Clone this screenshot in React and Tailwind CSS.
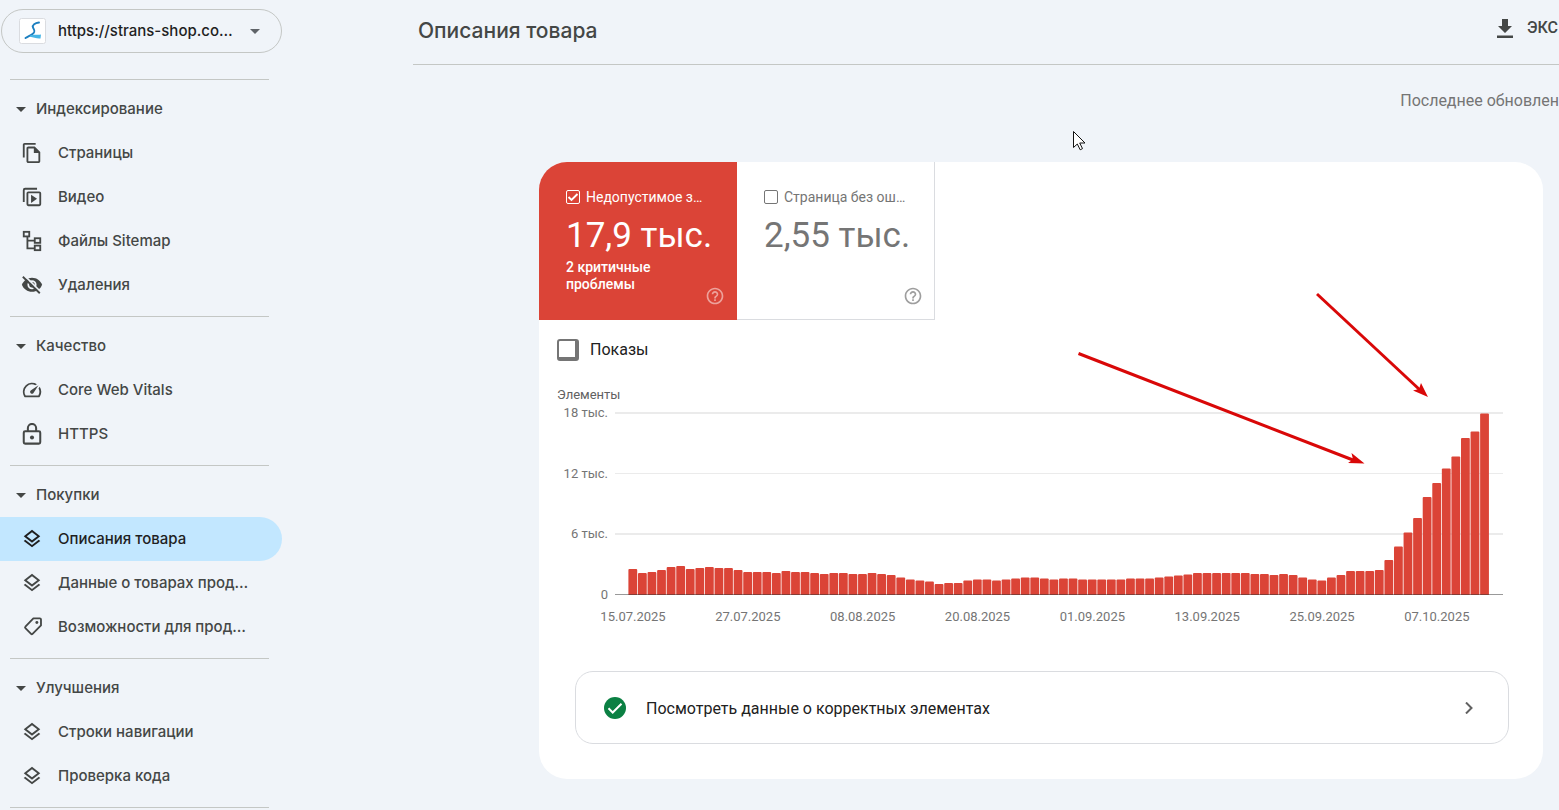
import React, { useState } from 'react';
import clsx from 'clsx';

const icons = {
  pages: (
    <path
      fill="currentColor"
      d="M16 1H4c-1.1 0-2 .9-2 2v14h2V3h12V1zm-1 4H8c-1.1 0-1.99.9-1.99 2L6 21c0 1.1.89 2 1.99 2H19c1.1 0 2-.9 2-2V11l-6-6zM8 21V7h6v5h5v9H8z"
    />
  ),
  video: (
    <>
      <path fill="none" stroke="currentColor" strokeWidth="2" d="M3 17.500V4.500Q3 3 4.500 3H17.500" />
      <rect x="7" y="7" width="14" height="14" rx="1" fill="none" stroke="currentColor" strokeWidth="2" />
      <path fill="currentColor" d="M11 9.500v9l6.500-4.500z" />
    </>
  ),
  sitemap: (
    <g fill="none" stroke="currentColor" strokeWidth="2">
      <rect x="3" y="2" width="6" height="5" />
      <rect x="15" y="9" width="6" height="5" />
      <rect x="15" y="17" width="6" height="5" />
      <path d="M7 7v13h8M7 11.500h8" />
    </g>
  ),
  removals: (
    <>
      <path fill="currentColor" d="M12 4C7 4 2.700 7.100 1 11.700c1.700 4.600 6 7.700 11 7.700s9.300-3.100 11-7.700C21.300 7.100 17 4 12 4z" />
      <circle cx="12" cy="11.700" r="4" fill="none" stroke="#f0f4f9" strokeWidth="2" />
      <path stroke="#f0f4f9" strokeWidth="2" d="M3.800 1.800L22 20" />
      <path stroke="currentColor" strokeWidth="2" d="M2 3l18.500 18" />
    </>
  ),
  vitals: (
    <path
      fill="currentColor"
      d="M20.38 8.57l-1.23 1.85a8 8 0 0 1-.22 7.58H5.07A8 8 0 0 1 15.58 6.85l1.85-1.23A10 10 0 0 0 3.35 19a2 2 0 0 0 1.72 1h13.85a2 2 0 0 0 1.74-1 10 10 0 0 0-.27-10.44zM10.590 15.410a2 2 0 0 0 2.830 0l5.660-8.490-8.490 5.660a2 2 0 0 0 0 2.830z"
    />
  ),
  lock: (
    <>
      <rect x="3" y="9" width="18" height="13.500" rx="1.500" fill="none" stroke="currentColor" strokeWidth="2.200" />
      <path fill="none" stroke="currentColor" strokeWidth="2.200" d="M7.500 9V5.500a4.500 4.500 0 0 1 9 0V9" />
      <circle cx="12" cy="15.700" r="2.200" fill="currentColor" />
    </>
  ),
  layers: (
    <path
      fill="currentColor"
      d="M11.990 18.540l-7.370-5.730L3 14.070l9 7 9-7-1.630-1.270-7.380 5.740zM12 16l7.360-5.730L21 9l-9-7-9 7 1.630 1.270L12 16zm0-11.470L17.740 9 12 13.470 6.260 9 12 4.530z"
    />
  ),
  tag: (
    <>
      <path
        fill="none"
        stroke="currentColor"
        strokeWidth="2"
        strokeLinejoin="round"
        d="M13.500 2.500H20.500Q21.800 2.500 21.800 3.800V10.300L12.600 19.500Q11.800 20.300 11 19.500L4.800 13.300Q4 12.500 4.800 11.700z"
      />
      <circle cx="17.300" cy="7" r="1.600" fill="currentColor" />
    </>
  ),
};

const sections = [
  {
    title: 'Индексирование',
    items: [
      { label: 'Страницы', icon: 'pages' },
      { label: 'Видео', icon: 'video' },
      { label: 'Файлы Sitemap', icon: 'sitemap' },
      { label: 'Удаления', icon: 'removals' },
    ],
  },
  {
    title: 'Качество',
    items: [
      { label: 'Core Web Vitals', icon: 'vitals' },
      { label: 'HTTPS', icon: 'lock' },
    ],
  },
  {
    title: 'Покупки',
    items: [
      { label: 'Описания товара', icon: 'layers', active: true },
      { label: 'Данные о товарах прод…', icon: 'layers' },
      { label: 'Возможности для прод…', icon: 'tag' },
    ],
  },
  {
    title: 'Улучшения',
    items: [
      { label: 'Строки навигации', icon: 'layers' },
      { label: 'Проверка кода', icon: 'layers' },
    ],
  },
];

// bar heights in chart units, one per day from 15.07.2025
const bars = [
  26, 22, 23, 25, 28, 29, 26, 27, 28, 27, 27, 25, 23, 23, 23, 22, 24, 23, 23, 22,
  21, 22, 22, 21, 21, 22, 21, 20, 17.5, 15.5, 14.5, 13.5, 11, 12, 12, 14.5, 15.5, 15.5, 14.5, 15.5,
  16.5, 17.5, 17.5, 16.5, 15.5, 16.5, 16.5, 15.5, 15.5, 15.5, 15.5, 15.5, 16.5, 16.5, 16.5, 17.5, 18.5, 19.5, 20.5, 22,
  22, 22, 22, 22, 22, 21, 21, 20, 21, 20, 17.5, 15.5, 14.5, 17.5, 20, 24, 24, 24, 25, 35,
  48.5, 62.5, 77, 98, 112, 126.5, 138.5, 157, 163.5, 181.5,
];

const dates = [
  '15.07.2025',
  '27.07.2025',
  '08.08.2025',
  '20.08.2025',
  '01.09.2025',
  '13.09.2025',
  '25.09.2025',
  '07.10.2025',
];

const STEP = 9.57;
const BASE = 192;

const Icon = ({ name }) => (
  <svg viewBox="0 0 24 24" className="size-[22px] shrink-0" aria-hidden="true">
    {icons[name]}
  </svg>
);

const Caret = ({ className }) => (
  <svg viewBox="0 0 10 5" className={className} aria-hidden="true">
    <path d="M0 0h10L5 5z" fill="currentColor" />
  </svg>
);

const Sidebar = () => (
  <aside className="w-[282px] shrink-0 pt-[9px] font-['Inter',sans-serif] text-[15px] font-medium text-[#444746]">
    <div className="relative ml-px flex h-11 items-center rounded-full border border-[#c4c7c5] pl-[17px]">
      <svg viewBox="0 0 27 26" className="h-[26px] w-[27px] shrink-0" aria-hidden="true">
        <rect x="0.5" y="0.5" width="26" height="25" rx="2" fill="#fff" stroke="#dadce0" />
        <path
          d="M20 4.500C16 5 13 7 14 9.500s3 4-.500 6.500c-2 1.500-4.500 2.500-7 4"
          fill="none"
          stroke="#1c7fc0"
          strokeWidth="1.900"
          strokeLinecap="round"
        />
        <path d="M11 17.500c3-1.500 7-.500 11-1l-.500 4c-3.500.500-7-1.200-10.500-1.700z" fill="#45b5e6" />
      </svg>
      <select
        aria-label="Ресурс"
        className="h-full w-full appearance-none rounded-full bg-transparent pl-3 font-['Inter',sans-serif] text-[15px] font-medium text-[#1f1f1f] outline-none"
      >
        <option>https://strans-shop.co…</option>
      </select>
      <Caret className="pointer-events-none absolute right-[21px] h-[5px] w-[10px] text-[#5f6368]" />
    </div>

    <nav className="mt-[26px]">
      {sections.map((section) => (
        <div key={section.title} className="mb-[9px]">
          <hr className="mr-[13px] mb-[7px] ml-[10px] border-[#c4c7c5]" />
          <button type="button" className="flex h-11 w-full items-center gap-[10px] pl-4">
            <Caret className="h-[5px] w-[10px]" />
            {section.title}
          </button>
          {section.items.map((item) => (
            <a
              key={item.label}
              href="#"
              className={clsx(
                'flex h-11 items-center gap-[15px] rounded-r-full pl-[21px] whitespace-nowrap',
                item.active && 'bg-[#c2e7ff] text-[#1f1f1f]'
              )}
            >
              <Icon name={item.icon} />
              {item.label}
            </a>
          ))}
        </div>
      ))}
      <hr className="mr-[13px] ml-[10px] border-[#c4c7c5]" />
    </nav>
  </aside>
);

const HelpIcon = () => (
  <svg viewBox="0 0 24 24" className="size-5" aria-hidden="true">
    <path
      fill="currentColor"
      d="M11 18h2v-2h-2v2zm1-16C6.480 2 2 6.480 2 12s4.480 10 10 10 10-4.480 10-10S17.520 2 12 2zm0 18c-4.410 0-8-3.590-8-8s3.590-8 8-8 8 3.590 8 8-3.590 8-8 8zm0-14c-2.210 0-4 1.790-4 4h2c0-1.100.900-2 2-2s2 .900 2 2c0 2-3 1.750-3 5h2c0-2.250 3-2.500 3-5 0-2.210-1.790-4-4-4z"
    />
  </svg>
);

const MetricTile = ({ id, label, value, note, selected }) => {
  const [checked, setChecked] = useState(Boolean(selected));

  return (
    <div
      className={clsx(
        'relative h-[158px] w-[198px] border-r border-b pt-[25px] pl-[27px]',
        selected ? 'border-[#db4437] bg-[#db4437] text-white' : 'border-[#dadce0] text-[#757575]'
      )}
    >
      <div className="flex h-[19px] items-center gap-[6px]">
        <span className="relative flex size-[14px]">
          <input
            id={id}
            type="checkbox"
            checked={checked}
            onChange={() => setChecked(!checked)}
            className="size-[14px] appearance-none rounded-[2px] border border-current"
          />
          {checked && (
            <svg viewBox="0 0 14 14" className="pointer-events-none absolute inset-0" aria-hidden="true">
              <path d="M2.500 7l3 3L11.500 4" fill="none" stroke="currentColor" strokeWidth="1.900" />
            </svg>
          )}
        </span>
        <label htmlFor={id} className="text-sm whitespace-nowrap">
          {label}
        </label>
      </div>
      <div className="mt-2 text-[35px] leading-[44px] whitespace-nowrap">{value}</div>
      {note && <div className="mt-px w-[110px] text-sm leading-[17px] font-medium">{note}</div>}
      <button
        type="button"
        aria-label="Справка"
        className={clsx('absolute right-[11px] bottom-[13px]', selected ? 'text-white/50' : 'text-[#9e9e9e]')}
      >
        <HelpIcon />
      </button>
    </div>
  );
};

const Chart = () => (
  <svg viewBox="0 0 946 224" className="block w-full text-[13px]" role="img" aria-label="Элементы">
    <rect x="58" y="9" width="888" height="2" fill="#ebebeb" />
    <rect x="58" y="70" width="888" height="1" fill="#ebebeb" />
    <rect x="58" y="130" width="888" height="2" fill="#ebebeb" />
    <g fill="#757575" textAnchor="end">
      <text x="51" y="14">18 тыс.</text>
      <text x="51" y="75">12 тыс.</text>
      <text x="51" y="135">6 тыс.</text>
      <text x="51" y="196">0</text>
    </g>
    {bars.map((h, i) => (
      <path
        key={i}
        fill="#db4437"
        d={`M${71.4 + i * STEP} ${BASE}v${1 - h}q0 -1 1 -1h6.800q1 0 1 1v${h - 1}z`}
      />
    ))}
    <rect x="58" y="191" width="888" height="1" fill="#333" fillOpacity="0.5" />
    <g fill="#757575" textAnchor="middle">
      {dates.map((date, i) => (
        <text key={date} x={76 + i * 12 * STEP} y="218">
          {date}
        </text>
      ))}
    </g>
  </svg>
);

// hand-drawn pointers over the growth period
const Annotations = () => (
  <svg viewBox="0 0 1004 616" className="pointer-events-none absolute top-0 left-0 w-full" aria-hidden="true">
    <g stroke="#d90808" strokeWidth="3" fill="none">
      <path d="M778 132L881 228" />
      <path d="M539.500 191.500L814 298" />
    </g>
    <g fill="#d90808">
      <path d="M889 235L874 228.500L880 227L882 221z" />
      <path d="M825.500 301.500L809 301L814 297.500L812.500 291z" />
    </g>
  </svg>
);

const App = () => {
  const [impressions, setImpressions] = useState(false);

  return (
    <div className="flex min-h-screen overflow-hidden bg-[#f0f4f9] font-['Roboto',sans-serif]">
      <Sidebar />

      <main className="relative ml-[131px] min-w-0 flex-1">
        <header className="flex h-[65px] items-center justify-between border-b border-[#c4c7c5] pb-[2px] pl-[5px]">
          <h1 className="font-['Inter',sans-serif] text-[21px] font-medium text-[#444746]">Описания товара</h1>
          <button type="button" className="flex items-center gap-[14px] pr-px pb-[6px] text-base font-medium text-[#444746]">
            <svg viewBox="0 0 16 19" className="h-[19px] w-4" aria-hidden="true">
              <path fill="currentColor" d="M5 0h6v7h4L8 14 1 7h4zM0 16.500h16V19H0z" />
            </svg>
            ЭКС
          </button>
        </header>

        <p className="mt-6 text-right text-base text-[#757575]">Последнее обновлен</p>

        <svg viewBox="0 0 13 20" className="absolute top-[131px] left-[660px] h-5 w-[13px]" aria-hidden="true">
          <path d="M.500.500V16.500L4.300 13l2.900 5.800 2.300-1.200L6.700 12H12z" fill="#fff" stroke="#111" />
        </svg>

        <section className="relative mt-[49px] mr-4 ml-[126px] overflow-hidden rounded-[28px] bg-white pb-[35px]">
          <div className="flex">
            <MetricTile
              id="invalid"
              label="Недопустимое з…"
              value="17,9 тыс."
              note="2 критичные проблемы"
              selected
            />
            <MetricTile id="valid" label="Страница без ош…" value="2,55 тыс." />
          </div>

          <div className="flex items-center gap-[11px] pt-[17px] pl-[18px] text-base text-[#212121]">
            <input
              id="impressions"
              type="checkbox"
              checked={impressions}
              onChange={() => setImpressions(!impressions)}
              className="size-[22px] appearance-none rounded-[3px] border-2 border-r-4 border-b-4 border-[#757575] checked:bg-[#757575]"
            />
            <label htmlFor="impressions" className="pt-px">
              Показы
            </label>
          </div>

          <div className="pt-[25px] pr-10 pl-[18px]">
            <div className="text-[13px] leading-4 text-[#616161]">Элементы</div>
            <Chart />
          </div>

          <button
            type="button"
            className="mt-11 mr-[34px] ml-9 flex h-[73px] min-w-[calc(100%-70px)] items-center rounded-[18px] border border-[#dadce0] pr-[35px] pl-7 text-base text-[#212121]"
          >
            <svg viewBox="0 0 22 22" className="size-[22px]" aria-hidden="true">
              <circle cx="11" cy="11" r="11" fill="#0b8043" />
              <path d="M4.500 11.300l4.200 4.200 8.800-8.800" fill="none" stroke="#fff" strokeWidth="2" />
            </svg>
            <span className="pt-[2px] pl-5">Посмотреть данные о корректных элементах</span>
            <svg viewBox="0 0 8 12" className="ml-auto h-3 w-2" aria-hidden="true">
              <path d="M1 .500L6.500 6 1 11.500" fill="none" stroke="#616161" strokeWidth="2" />
            </svg>
          </button>

          <Annotations />
        </section>
      </main>
    </div>
  );
};

export default App;
